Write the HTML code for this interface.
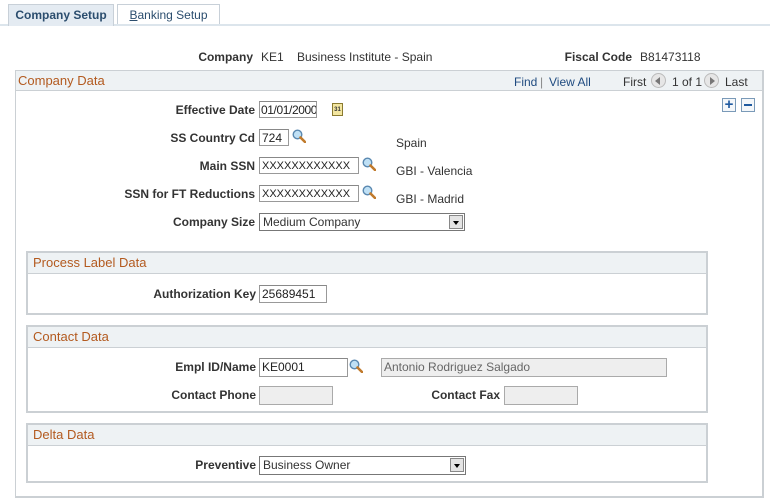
<!DOCTYPE html>
<html><head><meta charset="utf-8"><style>
body{margin:0;width:770px;height:504px;background:#fff;font-family:"Liberation Sans",Arial,sans-serif;font-size:12px;color:#333;position:relative;overflow:hidden}
.a{position:absolute;white-space:nowrap}
.l{position:absolute;font-weight:bold;color:#333;text-align:right;white-space:nowrap}
.in{position:absolute;border:1px solid #999;border-top-color:#888;background:#fff;height:17px;line-height:17px;padding-left:2px;box-sizing:border-box;font-size:12px;color:#222;overflow:hidden}
.dis{background:#eeeeee;color:#666;border-color:#aaa}
.box{position:absolute;border:2px solid #cbd0d4;box-sizing:border-box}
.hd{position:absolute;left:0;right:0;top:0;height:20px;background:#eef2f4;border-bottom:1px solid #cbd0d4;color:#b35a1f;font-size:13px;line-height:19px;padding-left:5px}
.sel{position:absolute;border:1px solid #777;background:#fff;height:18px;box-sizing:border-box;line-height:16px;padding-left:3px}
.sel i{position:absolute;right:1px;top:1px;width:14px;height:14px;background:#e4e4e4;border:1px solid #888;box-sizing:border-box}
.sel i:after{content:"";position:absolute;left:3px;top:5px;border-left:3px solid transparent;border-right:3px solid transparent;border-top:4px solid #000}
.mag{position:absolute;width:14px;height:14px}
</style></head><body>
<svg width="0" height="0" style="position:absolute"><defs><g id="m"><circle cx="5.5" cy="5.5" r="4.3" fill="#bfe0f5" stroke="#5a88b0" stroke-width="1.4"/><path d="M8.5 8.5 L13 13" stroke="#c07a2c" stroke-width="2.6" stroke-linecap="round"/></g></defs></svg>
<div class="a" style="left:0;top:24px;width:770px;height:2px;background:#dce5ec"></div>
<div class="a" style="left:8px;top:4px;width:104px;height:21px;background:#e4ebf2;border:1px solid #c8d0d8;border-bottom:none;font-weight:bold;color:#2b4d6e;text-align:center;line-height:21px;font-size:12px">Company Setup</div>
<div class="a" style="left:117px;top:4px;width:101px;height:19px;background:#fff;border:1px solid #c8d0d8;border-bottom:none;color:#2b4d6e;text-align:center;line-height:21px"><u>B</u>anking Setup</div>
<div class="l" style="left:0;width:253px;top:50px">Company</div>
<div class="a" style="left:261px;top:50px">KE1</div>
<div class="a" style="left:297px;top:50px">Business Institute - Spain</div>
<div class="l" style="left:0;width:632px;top:50px">Fiscal Code</div>
<div class="a" style="left:640px;top:50px">B81473118</div>
<div class="box" style="left:15px;top:70px;width:749px;height:428px;border-width:1px 2px 2px 1px">
<div class="hd" style="padding-left:2px;height:19px">Company Data</div>
</div>
<div class="a" style="left:514px;top:75px;color:#1f4b80">Find</div>
<div class="a" style="left:540px;top:75px;color:#888">|</div>
<div class="a" style="left:549px;top:75px;color:#1f4b80">View All</div>
<div class="a" style="left:623px;top:75px">First</div>
<div class="a" style="left:651px;top:73px;width:15px;height:15px;border-radius:50%;background:#e6e6e6;border:1px solid #bbb;box-sizing:border-box"></div>
<div class="a" style="left:655px;top:77px;border-right:5px solid #777;border-top:4px solid transparent;border-bottom:4px solid transparent"></div>
<div class="a" style="left:672px;top:75px">1 of 1</div>
<div class="a" style="left:704px;top:73px;width:15px;height:15px;border-radius:50%;background:#e6e6e6;border:1px solid #bbb;box-sizing:border-box"></div>
<div class="a" style="left:710px;top:77px;border-left:5px solid #777;border-top:4px solid transparent;border-bottom:4px solid transparent"></div>
<div class="a" style="left:725px;top:75px">Last</div>
<div class="a" style="left:722px;top:98px;width:14px;height:14px;border:1px solid #7a9ab8;box-sizing:border-box;background:#f4f7fa;color:#1f5aa0;font-weight:bold;font-size:15px;line-height:11px;text-align:center">+</div>
<div class="a" style="left:741px;top:98px;width:14px;height:14px;border:1px solid #7a9ab8;box-sizing:border-box;background:#f4f7fa"><div style="position:absolute;left:2px;top:5px;width:8px;height:2px;background:#1f5aa0"></div></div>
<div class="l" style="left:0;width:255px;top:103px">Effective Date</div>
<div class="in" style="left:259px;top:101px;width:58px;padding-left:1px;letter-spacing:-0.4px">01/01/2000</div>
<div class="a" style="left:332px;top:103px;width:11px;height:13px;background:#f3e6a0;border:1px solid #8a7a30;box-sizing:border-box;font-size:6px;line-height:12px;text-align:center;font-weight:bold">31</div>
<div class="l" style="left:0;width:255px;top:131px">SS Country Cd</div>
<div class="in" style="left:259px;top:129px;width:30px">724</div>
<svg class="mag" style="left:292px;top:129px"><use href="#m"/></svg>
<div class="a" style="left:396px;top:136px">Spain</div>
<div class="l" style="left:0;width:255px;top:159px">Main SSN</div>
<div class="in" style="left:259px;top:157px;width:100px;font-size:11px">XXXXXXXXXXXX</div>
<svg class="mag" style="left:362px;top:157px"><use href="#m"/></svg>
<div class="a" style="left:396px;top:164px">GBI - Valencia</div>
<div class="l" style="left:0;width:255px;top:187px">SSN for FT Reductions</div>
<div class="in" style="left:259px;top:185px;width:100px;font-size:11px">XXXXXXXXXXXX</div>
<svg class="mag" style="left:362px;top:185px"><use href="#m"/></svg>
<div class="a" style="left:396px;top:192px">GBI - Madrid</div>
<div class="l" style="left:0;width:255px;top:215px">Company Size</div>
<div class="sel" style="left:259px;top:213px;width:206px">Medium Company<i></i></div>
<div class="box" style="left:26px;top:251px;width:682px;height:64px"><div class="hd">Process Label Data</div></div>
<div class="l" style="left:0;width:256px;top:287px">Authorization Key</div>
<div class="in" style="left:259px;top:285px;width:68px;height:18px">25689451</div>
<div class="box" style="left:26px;top:325px;width:682px;height:88px"><div class="hd">Contact Data</div></div>
<div class="l" style="left:0;width:256px;top:360px">Empl ID/Name</div>
<div class="in" style="left:259px;top:358px;width:89px;height:19px">KE0001</div>
<svg class="mag" style="left:349px;top:359px"><use href="#m"/></svg>
<div class="in dis" style="left:381px;top:358px;width:286px;height:19px">Antonio Rodriguez Salgado</div>
<div class="l" style="left:0;width:256px;top:388px">Contact Phone</div>
<div class="in dis" style="left:259px;top:386px;width:74px;height:19px"></div>
<div class="l" style="left:0;width:500px;top:388px">Contact Fax</div>
<div class="in dis" style="left:504px;top:386px;width:74px;height:19px"></div>
<div class="box" style="left:26px;top:423px;width:682px;height:60px"><div class="hd">Delta Data</div></div>
<div class="l" style="left:0;width:256px;top:458px">Preventive</div>
<div class="sel" style="left:259px;top:456px;width:207px;height:19px">Business Owner<i></i></div>
</body></html>
